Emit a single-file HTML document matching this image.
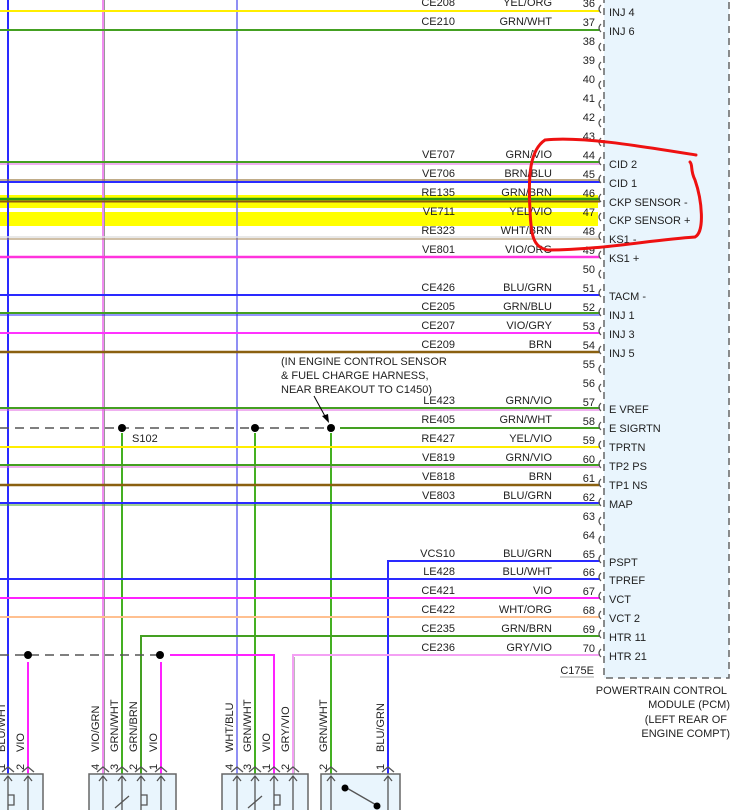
<!DOCTYPE html>
<html><head><meta charset="utf-8"><style>
html,body{margin:0;padding:0;background:#fff}
svg{display:block}
text{font-family:"Liberation Sans",Arial,sans-serif;font-size:11px;fill:#222}
.r{text-anchor:end}
</style></head><body>
<svg width="739" height="810" viewBox="0 0 739 810" xmlns="http://www.w3.org/2000/svg">
<!-- module box -->
<rect x="604" y="-5" width="125" height="683" fill="#e9f5fd" stroke="#666" stroke-width="1.5" stroke-dasharray="7,5"/>
<!-- highlights -->
<rect x="0" y="195" width="598" height="13" fill="#ffff00"/>
<rect x="0" y="212" width="598" height="14" fill="#ffff00"/>
<!-- vertical wires -->
<g stroke-width="2" fill="none">
<line x1="8" y1="0" x2="8" y2="775" stroke="#2a2aff"/>
<line x1="103" y1="0" x2="103" y2="775" stroke="#f08cf0"/>
<line x1="104.5" y1="0" x2="104.5" y2="775" stroke="#999" stroke-width="1"/>
<line x1="237" y1="0" x2="237" y2="775" stroke="#6a6af0" stroke-width="1.5"/>
<line x1="122" y1="433" x2="122" y2="775" stroke="#44b022"/>
<line x1="255" y1="433" x2="255" y2="775" stroke="#44b022"/>
<line x1="331" y1="433" x2="331" y2="775" stroke="#44b022"/>
<polyline points="600,636 141,636 141,775" stroke="#44a022"/>
<polyline points="600,561 388,561 388,775" stroke="#2a2aff"/>
<polyline points="600,655 293,655 293,775" stroke="#f4a0f4"/>
<line x1="294.5" y1="657" x2="294.5" y2="775" stroke="#bbb" stroke-width="1"/>
<polyline points="170,655 274,655 274,775" stroke="#ff22ff"/>
<line x1="28" y1="662" x2="28" y2="775" stroke="#ff22ff"/>
<line x1="161" y1="662" x2="161" y2="775" stroke="#ff22ff"/>
</g>
<!-- horizontal wires -->
<g stroke-width="2" fill="none">
<line x1="0" y1="11" x2="600" y2="11" stroke="#ffee00"/>
<line x1="0" y1="30" x2="600" y2="30" stroke="#44a022"/>
<line x1="0" y1="162" x2="600" y2="162" stroke="#44a022"/><line x1="0" y1="164" x2="600" y2="164" stroke="#e060e0" stroke-width="1"/>
<line x1="0" y1="180" x2="600" y2="180" stroke="#9a7a40" stroke-width="1.2"/><line x1="0" y1="182" x2="600" y2="182" stroke="#2a2aff"/>
<line x1="0" y1="199" x2="600" y2="199" stroke="#2a9a10" stroke-width="2.5"/><line x1="0" y1="201.5" x2="600" y2="201.5" stroke="#8a5a10" stroke-width="2"/>
<line x1="0" y1="237" x2="600" y2="237" stroke="#e0e0e0" stroke-width="1.5"/><line x1="0" y1="239" x2="600" y2="239" stroke="#a08050" stroke-width="1"/>
<line x1="0" y1="257" x2="600" y2="257" stroke="#ff33dd" stroke-width="2.5"/>
<line x1="0" y1="295" x2="600" y2="295" stroke="#2a2aff"/>
<line x1="0" y1="313" x2="600" y2="313" stroke="#44a022"/><line x1="0" y1="315" x2="600" y2="315" stroke="#2a2aff" stroke-width="1"/>
<line x1="0" y1="333" x2="600" y2="333" stroke="#ff33ff"/>
<line x1="0" y1="352" x2="600" y2="352" stroke="#8a6010" stroke-width="2.5"/>
<line x1="0" y1="408" x2="600" y2="408" stroke="#44a022"/><line x1="0" y1="410" x2="600" y2="410" stroke="#e060e0" stroke-width="1"/>
<line x1="340" y1="428" x2="600" y2="428" stroke="#44a022"/>
<line x1="0" y1="447" x2="600" y2="447" stroke="#ffee00"/>
<line x1="0" y1="465" x2="600" y2="465" stroke="#44a022"/><line x1="0" y1="467" x2="600" y2="467" stroke="#e060e0" stroke-width="1"/>
<line x1="0" y1="485" x2="600" y2="485" stroke="#8a6010" stroke-width="2.5"/>
<line x1="0" y1="503" x2="600" y2="503" stroke="#2a2aff"/><line x1="0" y1="505" x2="600" y2="505" stroke="#44a022" stroke-width="1"/>
<line x1="0" y1="579" x2="600" y2="579" stroke="#2a2aff"/>
<line x1="0" y1="598" x2="600" y2="598" stroke="#ff22ff"/>
<line x1="0" y1="617" x2="600" y2="617" stroke="#ffc090"/>
</g>
<!-- dashed splice lines -->
<g stroke="#555" stroke-width="1.5" stroke-dasharray="9,6" fill="none">
<line x1="0" y1="428" x2="330" y2="428"/>
<line x1="0" y1="655" x2="160" y2="655"/>
</g>
<g fill="#000">
<circle cx="122" cy="428" r="4"/><circle cx="255" cy="428" r="4"/><circle cx="331" cy="428" r="4"/>
<circle cx="28" cy="655" r="4"/><circle cx="160" cy="655" r="4"/>
</g>
<text x="132" y="442">S102</text>
<text x="281" y="365">(IN ENGINE CONTROL SENSOR</text>
<text x="281" y="379">&amp; FUEL CHARGE HARNESS,</text>
<text x="281" y="393">NEAR BREAKOUT TO C1450)</text>
<line x1="314" y1="396" x2="326" y2="418" stroke="#000" stroke-width="1"/>
<polygon points="329,423 322,416 328,414" fill="#000"/>
<!-- pin brackets -->
<g stroke="#555" stroke-width="1.2" fill="none">
<path d="M601,5 q-4,4 0,8 M601,24 q-4,4 0,8 M601,43 q-4,4 0,8 M601,62 q-4,4 0,8 M601,81 q-4,4 0,8 M601,100 q-4,4 0,8 M601,119 q-4,4 0,8 M601,138 q-4,4 0,8 M601,157 q-4,4 0,8 M601,175 q-4,4 0,8 M601,194 q-4,4 0,8 M601,213 q-4,4 0,8 M601,232 q-4,4 0,8 M601,251 q-4,4 0,8 M601,270 q-4,4 0,8 M601,289 q-4,4 0,8 M601,308 q-4,4 0,8 M601,327 q-4,4 0,8 M601,346 q-4,4 0,8 M601,365 q-4,4 0,8 M601,384 q-4,4 0,8 M601,403 q-4,4 0,8 M601,422 q-4,4 0,8 M601,441 q-4,4 0,8 M601,460 q-4,4 0,8 M601,479 q-4,4 0,8 M601,498 q-4,4 0,8 M601,517 q-4,4 0,8 M601,536 q-4,4 0,8 M601,555 q-4,4 0,8 M601,573 q-4,4 0,8 M601,592 q-4,4 0,8 M601,611 q-4,4 0,8 M601,630 q-4,4 0,8 M601,649 q-4,4 0,8"/>
</g>
<!-- wire ids -->
<g class="r">
<text class="r" x="455" y="6">CE208</text><text class="r" x="455" y="25">CE210</text>
<text class="r" x="455" y="158">VE707</text><text class="r" x="455" y="177">VE706</text>
<text class="r" x="455" y="196">RE135</text><text class="r" x="455" y="215">VE711</text>
<text class="r" x="455" y="234">RE323</text><text class="r" x="455" y="253">VE801</text>
<text class="r" x="455" y="291">CE426</text><text class="r" x="455" y="310">CE205</text>
<text class="r" x="455" y="329">CE207</text><text class="r" x="455" y="348">CE209</text>
<text class="r" x="455" y="404">LE423</text><text class="r" x="455" y="423">RE405</text>
<text class="r" x="455" y="442">RE427</text><text class="r" x="455" y="461">VE819</text>
<text class="r" x="455" y="480">VE818</text><text class="r" x="455" y="499">VE803</text>
<text class="r" x="455" y="557">VCS10</text><text class="r" x="455" y="575">LE428</text>
<text class="r" x="455" y="594">CE421</text><text class="r" x="455" y="613">CE422</text>
<text class="r" x="455" y="632">CE235</text><text class="r" x="455" y="651">CE236</text>
<!-- colors -->
<text class="r" x="552" y="6">YEL/ORG</text><text class="r" x="552" y="25">GRN/WHT</text>
<text class="r" x="552" y="158">GRN/VIO</text><text class="r" x="552" y="177">BRN/BLU</text>
<text class="r" x="552" y="196">GRN/BRN</text><text class="r" x="552" y="215">YEL/VIO</text>
<text class="r" x="552" y="234">WHT/BRN</text><text class="r" x="552" y="253">VIO/ORG</text>
<text class="r" x="552" y="291">BLU/GRN</text><text class="r" x="552" y="310">GRN/BLU</text>
<text class="r" x="552" y="329">VIO/GRY</text><text class="r" x="552" y="348">BRN</text>
<text class="r" x="552" y="404">GRN/VIO</text><text class="r" x="552" y="423">GRN/WHT</text>
<text class="r" x="552" y="442">YEL/VIO</text><text class="r" x="552" y="461">GRN/VIO</text>
<text class="r" x="552" y="480">BRN</text><text class="r" x="552" y="499">BLU/GRN</text>
<text class="r" x="552" y="557">BLU/GRN</text><text class="r" x="552" y="575">BLU/WHT</text>
<text class="r" x="552" y="594">VIO</text><text class="r" x="552" y="613">WHT/ORG</text>
<text class="r" x="552" y="632">GRN/BRN</text><text class="r" x="552" y="651">GRY/VIO</text>
<!-- pin numbers -->
<text class="r" x="595" y="7">36</text><text class="r" x="595" y="26">37</text><text class="r" x="595" y="45">38</text><text class="r" x="595" y="64">39</text><text class="r" x="595" y="83">40</text><text class="r" x="595" y="102">41</text><text class="r" x="595" y="121">42</text><text class="r" x="595" y="140">43</text><text class="r" x="595" y="159">44</text><text class="r" x="595" y="178">45</text><text class="r" x="595" y="197">46</text><text class="r" x="595" y="216">47</text><text class="r" x="595" y="235">48</text><text class="r" x="595" y="254">49</text><text class="r" x="595" y="273">50</text><text class="r" x="595" y="292">51</text><text class="r" x="595" y="311">52</text><text class="r" x="595" y="330">53</text><text class="r" x="595" y="349">54</text><text class="r" x="595" y="368">55</text><text class="r" x="595" y="387">56</text><text class="r" x="595" y="406">57</text><text class="r" x="595" y="425">58</text><text class="r" x="595" y="444">59</text><text class="r" x="595" y="463">60</text><text class="r" x="595" y="482">61</text><text class="r" x="595" y="501">62</text><text class="r" x="595" y="520">63</text><text class="r" x="595" y="539">64</text><text class="r" x="595" y="558">65</text><text class="r" x="595" y="576">66</text><text class="r" x="595" y="595">67</text><text class="r" x="595" y="614">68</text><text class="r" x="595" y="633">69</text><text class="r" x="595" y="652">70</text>
</g>
<!-- pin labels -->
<text x="609" y="16">INJ 4</text><text x="609" y="35">INJ 6</text>
<text x="609" y="168">CID 2</text><text x="609" y="187">CID 1</text>
<text x="609" y="206">CKP SENSOR -</text><text x="609" y="224">CKP SENSOR +</text>
<text x="609" y="243">KS1 -</text><text x="609" y="262">KS1 +</text>
<text x="609" y="300">TACM -</text><text x="609" y="319">INJ 1</text>
<text x="609" y="338">INJ 3</text><text x="609" y="357">INJ 5</text>
<text x="609" y="413">E VREF</text><text x="609" y="432">E SIGRTN</text>
<text x="609" y="451">TPRTN</text><text x="609" y="470">TP2 PS</text>
<text x="609" y="489">TP1 NS</text><text x="609" y="508">MAP</text>
<text x="609" y="566">PSPT</text><text x="609" y="584">TPREF</text>
<text x="609" y="603">VCT</text><text x="609" y="622">VCT 2</text>
<text x="609" y="641">HTR 11</text><text x="609" y="660">HTR 21</text>
<text class="r" x="594" y="674">C175E</text>
<line x1="560" y1="677" x2="594" y2="677" stroke="#aaa" stroke-width="1"/>
<text class="r" x="727" y="694">POWERTRAIN CONTROL</text>
<text class="r" x="730" y="708">MODULE (PCM)</text>
<text class="r" x="727" y="723">(LEFT REAR OF</text>
<text class="r" x="730" y="737">ENGINE COMPT)</text>
<!-- red annotation -->
<path d="M696,155 C640,146 580,136 545,140 C530,150 528,175 530,210 C531,235 533,248 548,250 C600,250 650,240 695,237 C705,232 702,200 695,180 C690,170 693,165 690,162" fill="none" stroke="#ee1111" stroke-width="3" stroke-linecap="round"/>
<!-- vertical labels -->
<g font-size="11">
<text transform="translate(5,752) rotate(-90)">BLU/WHT</text>
<text transform="translate(24,752) rotate(-90)">VIO</text>
<text transform="translate(99,752) rotate(-90)">VIO/GRN</text>
<text transform="translate(118,752) rotate(-90)">GRN/WHT</text>
<text transform="translate(137,752) rotate(-90)">GRN/BRN</text>
<text transform="translate(157,752) rotate(-90)">VIO</text>
<text transform="translate(233,752) rotate(-90)">WHT/BLU</text>
<text transform="translate(251,752) rotate(-90)">GRN/WHT</text>
<text transform="translate(270,752) rotate(-90)">VIO</text>
<text transform="translate(289,752) rotate(-90)">GRY/VIO</text>
<text transform="translate(327,752) rotate(-90)">GRN/WHT</text>
<text transform="translate(384,752) rotate(-90)">BLU/GRN</text>
<text transform="translate(5,770) rotate(-90)">1</text><text transform="translate(24,770) rotate(-90)">2</text>
<text transform="translate(99,770) rotate(-90)">4</text><text transform="translate(118,770) rotate(-90)">3</text>
<text transform="translate(137,770) rotate(-90)">2</text><text transform="translate(157,770) rotate(-90)">1</text>
<text transform="translate(233,770) rotate(-90)">4</text><text transform="translate(251,770) rotate(-90)">3</text>
<text transform="translate(270,770) rotate(-90)">1</text><text transform="translate(289,770) rotate(-90)">2</text>
<text transform="translate(327,770) rotate(-90)">2</text><text transform="translate(384,770) rotate(-90)">1</text>
</g>
<!-- bottom connectors -->
<g fill="#e9f5fd" stroke="#666" stroke-width="1.5">
<rect x="-5" y="774" width="48" height="45"/>
<rect x="89" y="774" width="87" height="45"/>
<rect x="222" y="774" width="86" height="45"/>
<rect x="321" y="774" width="79" height="45"/>
</g>
<g stroke="#555" stroke-width="1.3" fill="none">
<path d="M2,772 l6,-5 l6,5 M22,772 l6,-5 l6,5 M97,772 l6,-5 l6,5 M116,772 l6,-5 l6,5 M135,772 l6,-5 l6,5 M155,772 l6,-5 l6,5 M231,772 l6,-5 l6,5 M249,772 l6,-5 l6,5 M268,772 l6,-5 l6,5 M287,772 l6,-5 l6,5 M325,772 l6,-5 l6,5 M382,772 l6,-5 l6,5"/>
<path d="M8,776 v34 M28,776 v34 M103,776 v34 M122,776 v34 M141,776 v34 M161,776 v34 M237,776 v34 M255,776 v34 M274,776 v34 M293,776 v34 M331,776 v34 M388,776 v34"/>
<path d="M4,781 l4,-5 l4,5 M24,781 l4,-5 l4,5 M99,781 l4,-5 l4,5 M118,781 l4,-5 l4,5 M137,781 l4,-5 l4,5 M157,781 l4,-5 l4,5 M233,781 l4,-5 l4,5 M251,781 l4,-5 l4,5 M270,781 l4,-5 l4,5 M289,781 l4,-5 l4,5 M327,781 l4,-5 l4,5 M384,781 l4,-5 l4,5"/>
<path d="M8,795 h6 v10 h-6 M141,795 h6 v10 h-6 M274,795 h6 v10 h-6 M115,808 l14,-12 M248,808 l14,-12 M345,787 L378,806"/>
</g>
<circle cx="345" cy="788" r="3.5" fill="#000"/><circle cx="377" cy="806" r="3.5" fill="#000"/>
</svg>
</body></html>
